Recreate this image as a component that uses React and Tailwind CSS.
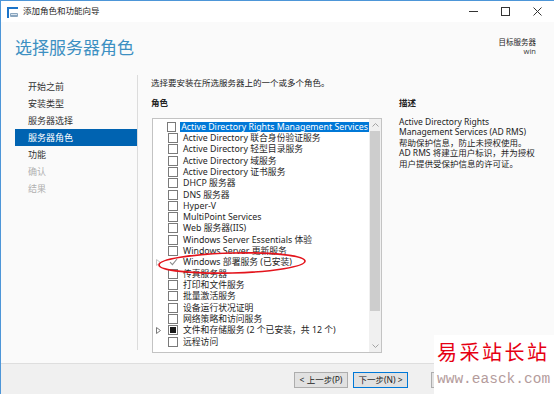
const cjk = { fontFamily: '"Noto Sans", "Noto Sans CJK SC", sans-serif' };

const roles = [
  { label: 'Active Directory Rights Management Services', selected: true },
  { label: 'Active Directory 联合身份验证服务' },
  { label: 'Active Directory 轻型目录服务' },
  { label: 'Active Directory 域服务' },
  { label: 'Active Directory 证书服务' },
  { label: 'DHCP 服务器' },
  { label: 'DNS 服务器' },
  { label: 'Hyper-V' },
  { label: 'MultiPoint Services' },
  { label: 'Web 服务器(IIS)' },
  { label: 'Windows Server Essentials 体验' },
  { label: 'Windows Server 更新服务' },
  { label: 'Windows 部署服务 (已安装)', state: 'installed', expand: true },
  { label: '传真服务器' },
  { label: '打印和文件服务' },
  { label: '批量激活服务' },
  { label: '设备运行状况证明' },
  { label: '网络策略和访问服务' },
  { label: '文件和存储服务 (2 个已安装，共 12 个)', state: 'partial', expand: true },
  { label: '远程访问' },
];

const steps = [
  { label: '开始之前' },
  { label: '安装类型' },
  { label: '服务器选择' },
  { label: '服务器角色', active: true },
  { label: '功能' },
  { label: '确认', disabled: true },
  { label: '结果', disabled: true },
];

const description = [
  'Active Directory Rights',
  'Management Services (AD RMS)',
  '帮助保护信息，防止未授权使用。',
  'AD RMS 将建立用户标识，并为授权',
  '用户提供受保护信息的许可证。',
];

const WizardIcon = () => (
  <svg width="11" height="11" viewBox="0 0 11 11">
    <rect x="0" y="0" width="2" height="11" fill="#1b74c9" />
    <rect x="0" y="0" width="11" height="2" fill="#1b74c9" />
    <rect x="3" y="6" width="8" height="4" rx="1" fill="#8aa6bf" />
    <rect x="4" y="7" width="6" height="1" fill="#d9e4ee" />
  </svg>
);

const Expander = ({ dark }) => (
  <svg width="5" height="7" viewBox="0 0 5 7">
    <path d="M0.5 0.5 L4.5 3.5 L0.5 6.5 Z" fill="none" stroke={dark ? '#7a7a7a' : '#c4c4c4'} strokeWidth="1" />
  </svg>
);

const RoleCheck = ({ state }) => {
  if (state === 'installed') {
    return (
      <div className="w-[10px] h-[10px] flex items-center justify-center">
        <svg width="9" height="8" viewBox="0 0 9 8">
          <path d="M1 4.2 L3.4 6.6 L8 1" fill="none" stroke="#8c8c8c" strokeWidth="1.1" />
        </svg>
      </div>
    );
  }
  return (
    <div className="w-[10px] h-[10px] border border-[#7a7a7a] bg-white flex items-center justify-center">
      {state === 'partial' && <div className="w-[6px] h-[6px] bg-[#1a1a1a]" />}
    </div>
  );
};

export default function App() {
  return (
    <div className="relative w-[554px] h-[394px] overflow-hidden bg-[#fafafa] border-l border-t border-[#4d96d8] flex flex-col text-[#1e1e1e]" style={cjk}>
      {/* title bar */}
      <div className="h-[21px] bg-white flex items-center shrink-0">
        <div className="ml-[6px] mt-[1px]"><WizardIcon /></div>
        <span className="ml-[5px] text-[8.5px] text-[#222]">添加角色和功能向导</span>
        <div className="ml-auto flex items-center h-full">
          <div className="w-[32px] flex justify-center">
            <svg width="9" height="9" viewBox="0 0 9 9"><path d="M0 4.5 H9" stroke="#333" strokeWidth="1" /></svg>
          </div>
          <div className="w-[32px] flex justify-center">
            <svg width="9" height="9" viewBox="0 0 9 9"><rect x="0.5" y="0.5" width="8" height="8" fill="none" stroke="#333" strokeWidth="1" /></svg>
          </div>
          <div className="w-[32px] flex justify-center mr-[1px]">
            <svg width="9" height="9" viewBox="0 0 9 9"><path d="M0.5 0.5 L8.5 8.5 M8.5 0.5 L0.5 8.5" stroke="#333" strokeWidth="1" /></svg>
          </div>
        </div>
      </div>

      {/* header */}
      <div className="h-[53px] shrink-0 flex justify-between">
        <h1 className="pl-[14px] pt-[16px] text-[17px] leading-[20px] text-[#3d90c2] font-normal">选择服务器角色</h1>
        <div className="pr-[18px] pt-[16px] flex flex-col items-end text-[7.5px] leading-[9px] text-[#222]">
          <span>目标服务器</span>
          <span className="text-[#444]">win</span>
        </div>
      </div>

      {/* main */}
      <div className="flex h-[288px] shrink-0">
        <nav className="w-[137px] h-[275px] border-r border-[#dcdcdc] pt-[3px] pl-[14px] shrink-0">
          {steps.map((s) => (
            <div
              key={s.label}
              className={`h-[17px] flex items-center pl-[13px] text-[9px] ${
                s.active ? 'bg-[#0063b1] text-white' : s.disabled ? 'text-[#b0b0b0]' : 'text-[#333]'
              }`}
            >
              {s.label}
            </div>
          ))}
        </nav>

        <section className="ml-[13px] w-[231px] shrink-0 flex flex-col">
          <p className="mt-[2px] h-[12px] leading-[12px] text-[8.5px] text-[#222]">选择要安装在所选服务器上的一个或多个角色。</p>
          <p className="mt-[8px] h-[12px] leading-[12px] text-[8.5px] font-bold text-[#222]">角色</p>
          <div className="mt-[9px] ml-[1px] h-[235px] border border-[#c3c3c3] bg-white flex">
            <ul className="flex-1 pt-[2px] overflow-hidden">
              {roles.map((r) => (
                <li key={r.label} className="h-[11.32px] flex items-center whitespace-nowrap">
                  <div className="w-[15px] pl-[3px] flex items-center">
                    {r.expand && <Expander dark={r.state === 'partial'} />}
                  </div>
                  <RoleCheck state={r.state} />
                  <span
                    className={`ml-[4px] px-[1px] text-[8.8px] leading-[10px] ${
                      r.selected ? 'bg-[#0078d7] text-white' : ''
                    }`}
                  >
                    {r.label}
                  </span>
                </li>
              ))}
            </ul>
            <div className="w-[12px] bg-[#f0f0f0] flex flex-col items-center">
              <div className="h-[12px] flex items-center justify-center">
                <svg width="7" height="4" viewBox="0 0 7 4"><path d="M0.5 3.5 L3.5 0.5 L6.5 3.5" fill="none" stroke="#a3a3a3" strokeWidth="1" /></svg>
              </div>
              <div className="w-[10px] h-[180px] bg-[#cdcdcd]" />
              <div className="flex-1" />
              <div className="h-[12px] flex items-center justify-center">
                <svg width="7" height="4" viewBox="0 0 7 4"><path d="M0.5 0.5 L3.5 3.5 L6.5 0.5" fill="none" stroke="#a3a3a3" strokeWidth="1" /></svg>
              </div>
            </div>
          </div>
        </section>

        <aside className="ml-[17px] w-[150px] flex flex-col text-[#222]">
          <p className="mt-[22px] h-[12px] leading-[12px] text-[8.5px] font-bold">描述</p>
          <div className="mt-[8px] text-[8.5px] leading-[10.4px] whitespace-nowrap">
            {description.map((line) => (
              <p key={line}>{line}</p>
            ))}
          </div>
        </aside>
      </div>

      {/* footer */}
      <div className="flex-1 border-t border-[#dedede] bg-[#f0f0f0] flex items-start pt-[8px] pl-[293px] gap-[5px]">
        <button className="w-[54px] h-[16px] bg-[#e1e1e1] border border-[#adadad] text-[8.5px] leading-[14px] text-[#222]">&lt; 上一步(P)</button>
        <button className="w-[55px] h-[16px] bg-[#e1e1e1] border border-[#0078d7] text-[8.5px] leading-[14px] text-[#222]">下一步(N) &gt;</button>
        <button className="ml-[18px] w-[54px] h-[16px] bg-[#e1e1e1] border border-[#adadad]" aria-label="安装" />
      </div>

      {/* red annotation */}
      <svg className="absolute left-[150px] top-[245px]" width="165" height="36" viewBox="0 0 165 36">
        <ellipse cx="81" cy="17" rx="73" ry="10" fill="none" stroke="#e3141c" strokeWidth="1.7" transform="rotate(-1.5 81 17)" />
      </svg>

      {/* watermark */}
      <div className="absolute left-[433px] top-[334px] w-[121px] h-[60px] bg-white flex flex-col pl-[3px]">
        <span className="mt-[5px] text-[20px] leading-[24px] tracking-[2.5px] text-[#e60012]" style={{ fontFamily: '"Noto Sans CJK SC", sans-serif' }}>易采站长站</span>
        <span className="mt-[7px] text-[14.5px] leading-[16px] text-[#b49c9c]" style={{ fontFamily: '"Liberation Mono", monospace' }}>www.easck.com</span>
      </div>
    </div>
  );
}
